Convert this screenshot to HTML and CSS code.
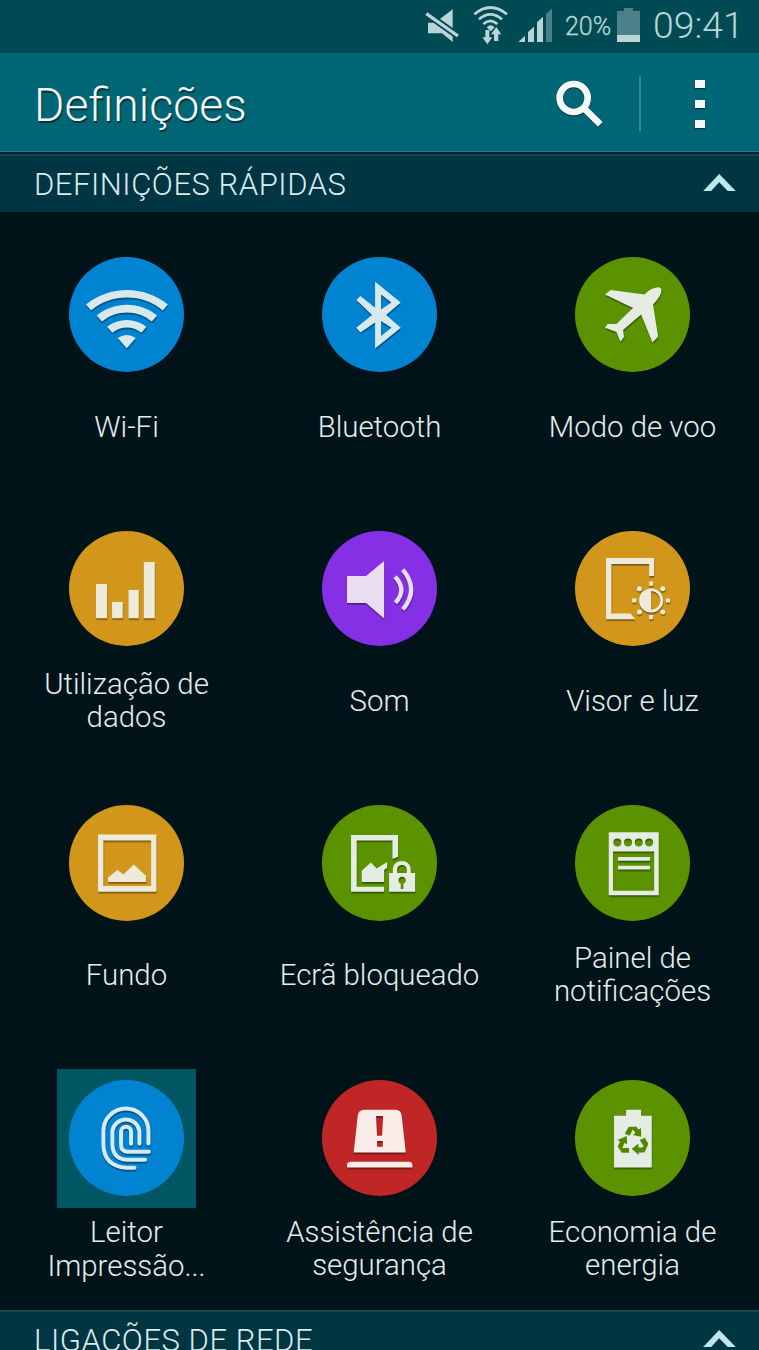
FILE: index.html
```html
<!DOCTYPE html>
<html lang="pt">
<head>
<meta charset="utf-8">
<title>Definições</title>
<link rel="stylesheet" href="styles.css">
</head>
<body>
<div class="screen">
  <div class="status">
    <svg class="status-icons" viewBox="0 0 450 156">
      <g fill="#b9d5d6">
        <path d="M54 68H75L128 28V126L96 100H54Z"/>
        <path d="M50 41L144 108" stroke="#004a54" stroke-width="21"/>
        <path d="M49 41L144 108" stroke="#b9d5d6" stroke-width="10"/>
        <g fill="none" stroke="#b9d5d6" stroke-width="8">
          <path d="M193 43Q241 2 291 43"/><path d="M207 58Q241 28 276 58"/><path d="M220 72Q241 53 262 72"/>
        </g>
        <path d="M230 82Q241 70 254 82L242 94Z"/>
        <path d="M226 90H238V112H247L232 133L217 112H226Z"/>
        <path d="M252 123V103H243L259 81L274 103H265V123Z"/>
        <path d="M325 126L345 107V126ZM354 96L372 80V126H354ZM381 67L399 50V126H381Z"/>
        <path d="M408 42L426 26V126H408Z" fill="#4b8088"/>
      </g>
    </svg>
    <span class="percent">20%</span>
    <svg class="battery" viewBox="0 0 69 102">
      <path d="M0 9H21V0H48V9H69V81H0Z" fill="#4b8088"/><path d="M0 81H69V102H0Z" fill="#b9d5d6"/>
    </svg>
    <span class="clock">09:41</span>
  </div>
  <header class="bar">
    <h1 class="title">Definições</h1>
    <svg class="search" viewBox="440 238 144 144">
      <g class="ink"><circle cx="493" cy="292" r="42" fill="none" stroke="#f4f7f6" stroke-width="20"/>
      <path d="M521 320L573 371" stroke="#f4f7f6" stroke-width="20"/></g>
    </svg>
    <span class="divider"></span>
    <span class="more"><i></i><i></i><i></i></span>
  </header>
  <section>
    <h2 class="section"><span>DEFINIÇÕES RÁPIDAS</span>
      <svg class="chevron" viewBox="610 131 98 51"><path d="M610 182L658 131L708 182H684L658 156L634 182Z" fill="#bfe6ea"/></svg>
    </h2>
    <div class="grid">
      <div class="item"><div class="tile"><svg class="disc blue" viewBox="88 51 346 346"><g class="ink">
        <path d="M139 193C210 135 313 135 384 193L369 211C308 159 215 159 154 211Z"/>
        <path d="M171 226C224 183 299 183 352 226L336 244C293 208 230 208 187 244Z"/>
        <path d="M202 260C238 233 284 233 320 260L305 278C279 257 244 257 218 278Z"/>
        <path d="M234 294Q261 275 288 294L261 324Z"/></g></svg></div>
        <p class="label">Wi-Fi</p></div>
      <div class="item"><div class="tile"><svg class="disc blue" viewBox="66 51 346 346"><g class="ink">
        <path fill-rule="evenodd" d="M225 125L302 187L258 225L302 263L225 325V247L181 277L169 263L216 225L169 180L181 168L225 203ZM243 163V208L274 187ZM243 243V288L274 263Z"/></g></svg></div>
        <p class="label">Bluetooth</p></div>
      <div class="item"><div class="tile"><svg class="disc green" viewBox="825 51 346 346"><g class="ink">
        <path d="M915 163L932 150L1033 163Q1055 141 1079 142L1084 147Q1085 168 1059 193L1074 290L1057 307L1023 223L969 270L972 291L961 305L949 276L915 263L923 252L949 252L999 204Z"/></g></svg></div>
        <p class="label">Modo de voo</p></div>

      <div class="item"><div class="tile"><svg class="disc orange" viewBox="88 33 346 346"><g class="ink">
        <path d="M169 192H202V294H169ZM217 246H249V294H217ZM266 210H297V294H266ZM312 126H345V294H312Z"/></g></svg></div>
        <p class="label">Utilização de<br>dados</p></div>
      <div class="item"><div class="tile"><svg class="disc purple" viewBox="36 33 346 346"><g class="ink">
        <path d="M111 168H168L222 123V295L168 249H111Z"/>
        <g fill="none" stroke="#e9ddf0" stroke-width="13"><path d="M255 170Q292 209 256 248"/><path d="M278 149Q328 209 278 268"/></g></g></svg></div>
        <p class="label">Som</p></div>
      <div class="item"><div class="tile"><svg class="disc orange" viewBox="795 33 346 346"><g class="ink">
        <path d="M888 114H1032V168H1017V132H904V280H961L976 297H888Z"/>
        <circle cx="1023" cy="241" r="32" fill="none" stroke="#edeee4" stroke-width="8"/>
        <path d="M1023 208A33 33 0 0 0 1023 274Z"/>
        <path d="M1017 184H1029V197H1017ZM1017 285H1029V297H1017ZM966 235H979V247H966ZM1067 235H1080V247H1067Z"/>
        <circle cx="988" cy="206" r="7.500"/><circle cx="1058" cy="206" r="7.500"/><circle cx="988" cy="276" r="7.500"/><circle cx="1058" cy="276" r="7.500"/></g></svg></div>
        <p class="label">Visor e luz</p></div>

      <div class="item"><div class="tile"><svg class="disc orange" viewBox="87 45 346 346"><g class="ink">
        <path fill-rule="evenodd" d="M174 133H349V305H174ZM190 151V288H333V151Z"/>
        <path d="M204 262L232 240L250 253L281 223L318 258V276H204Z"/></g></svg></div>
        <p class="label">Fundo</p></div>
      <div class="item"><div class="tile"><svg class="disc green" viewBox="846 45 346 346"><g class="ink">
        <path d="M933 135H1074V200L1057 207V151H950V290H1032V305H933Z"/>
        <path d="M965 242L992 217L1010 235L1041 216V233L1032 240V276H965Z"/>
        <path fill-rule="evenodd" d="M1047 249H1058V239C1058 204 1112 204 1112 239V249H1125V305H1047ZM1071 249H1100V239C1100 220 1071 220 1071 239ZM1082 281V297H1090V281A11 11 0 1 0 1082 281Z"/></g></svg></div>
        <p class="label">Ecrã bloqueado</p></div>
      <div class="item"><div class="tile"><svg class="disc green" viewBox="105 45 346 346"><g class="ink">
        <path fill-rule="evenodd" d="M206 127H356V315H206ZM219 184V302H342V184ZM220 157a12 12 0 1 0 24 0a12 12 0 1 0 -24 0ZM252 157a12 12 0 1 0 24 0a12 12 0 1 0 -24 0ZM284 157a12 12 0 1 0 24 0a12 12 0 1 0 -24 0ZM315 157a12 12 0 1 0 24 0a12 12 0 1 0 -24 0Z"/>
        <path d="M234 201H330V212H234ZM234 227H330V238H234Z"/></g></svg></div>
        <p class="label">Painel de<br>notificações</p></div>

      <div class="item last"><div class="tile selected"><svg class="disc blue" viewBox="87 58 346 346"><g class="ink">
        <g fill="none" stroke="#d8ebf5" stroke-width="12" stroke-linecap="round">
        <path d="M325 248V211A67 67 0 0 0 190 211V252Q192 316 258 321H283"/>
        <path d="M298 248V211A41 41 0 0 0 217 211V252Q219 295 260 297H315"/>
        <path d="M273 249V213A15 15 0 0 0 243 213V252Q243 272 262 273H326"/></g></g></svg></div>
        <p class="label tall">Leitor<br>Impressão...</p></div>
      <div class="item last"><div class="tile"><svg class="disc red" viewBox="126 58 346 346"><g class="ink pale">
        <path fill-rule="evenodd" d="M233 165Q235 147 252 147H345Q363 147 365 165L377 275H221ZM288 166L291 225H306L309 166ZM291 241V258H308V241Z"/>
        <path d="M201 320V314Q201 303 212 303H386Q397 303 397 314V320Z"/></g></svg></div>
        <p class="label">Assistência de<br>segurança</p></div>
      <div class="item last"><div class="tile"><svg class="disc green" viewBox="135 58 346 346"><g class="ink">
        <path d="M252 165H288V147H333V165H365V320H252Z"/></g>
        <g fill="#528800"><path d="M284 219L294 201Q296 198 300 198H319L325 206L333 202V228L308 223L316 217L308 206L299 225Z"/>
        <path d="M262 238L290 226L291 251L283 247L277 262H297V276H275L263 257L270 242Z"/>
        <path d="M305 265L325 248V260H335L341 257L329 238L344 231L355 250L343 275H326V283Z"/></g></svg></div>
        <p class="label">Economia de<br>energia</p></div>
    </div>
  </section>
  <section>
    <h2 class="section"><span>LIGAÇÕES DE REDE</span>
      <svg class="chevron" viewBox="610 131 98 51"><path d="M610 182L658 131L708 182H684L658 156L634 182Z" fill="#bfe6ea"/></svg>
    </h2>
  </section>
</div>
</body>
</html>
```
FILE: styles.css
```css
* { box-sizing: border-box; }
body { margin: 0; background: #001318; font-family: Roboto, "Noto Sans", sans-serif; font-weight: 300; color: #e3efef; }
.screen { width: 759px; height: 1350px; overflow: hidden; background: #001318; }
.status { height: 53px; display: flex; align-items: flex-start; background: linear-gradient(#004a54 0 50px, #00434d); color: #b9d5d6; padding-left: 410px; white-space: nowrap; }
.status-icons { width: 150px; height: 52px; flex: none; }
.percent { width: 57px; padding-left: 5px; font-size: 25px; line-height: 30px; padding-top: 12px; -webkit-text-stroke: .3px #b9d5d6; }
.battery { width: 23px; height: 34px; margin-top: 8px; flex: none; }
.clock { margin-left: 13px; font-size: 37.300px; line-height: 51px; }
.bar { height: 101px; display: flex; align-items: center; padding: 0 54px 0 34px; background: linear-gradient(#006675 0 98px, #23808c 98px 99px, #00242f 99px 101px); }
.title { margin: 0 auto 0 0; padding-top: 3px; font-size: 46.400px; line-height: 56px; font-weight: 300; color: #f4f7f6; text-shadow: 1px 2px 1px rgba(0,0,0,.5); }
.search { width: 48px; height: 48px; }
.divider { width: 2px; height: 55px; margin-left: 35px; background: #37899a; }
.more { margin-left: 54px; width: 10px; display: flex; flex-direction: column; gap: 12px; }
.more i { width: 10px; height: 8px; background: #f4f7f6; box-shadow: 0 1px 1px rgba(0,0,0,.5); }
.section { height: 58px; margin: 0; padding: 3px 23px 0 34px; display: flex; align-items: center; justify-content: space-between; font-size: 31px; font-weight: 300; letter-spacing: .54px; line-height: 40px; color: #dcebed; background: linear-gradient(#174752 0 2px, #003542 2px); }
.chevron { width: 33px; height: 17px; margin-bottom: 4px; }
.grid { display: grid; grid-template-columns: repeat(3, 253px); grid-auto-rows: 274.200px; height: 1098px; }
.item { display: flex; flex-direction: column; align-items: center; padding-top: 33px; }
.last { padding-top: 34px; }
.tile { width: 139px; height: 139px; flex: none; display: flex; align-items: center; justify-content: center; }
.selected { background: #005663; }
.disc { width: 115.500px; height: 115.500px; border-radius: 50%; }
.blue { background: #0084d1; }
.green { background: #5b9300; }
.orange { background: #d2971a; }
.purple { background: #8630e5; }
.red { background: #bf2625; }
.ink { fill: #e4ece4; filter: drop-shadow(1px 5px 1px rgba(0,0,0,.4)); }
.blue .ink { fill: #d8e9ee; }
.orange .ink { fill: #edeada; }
.purple .ink { fill: #e9ddf0; }
.pale { fill: #f8ebe8; }
.search .ink { filter: drop-shadow(0 3px 2px rgba(0,0,0,.5)); }
.label { margin: 0; height: 86px; display: flex; align-items: center; text-align: center; font-size: 29.400px; line-height: 33px; white-space: nowrap; }
.last .label { height: 83px; }
.label.tall { line-height: 34px; }
```
